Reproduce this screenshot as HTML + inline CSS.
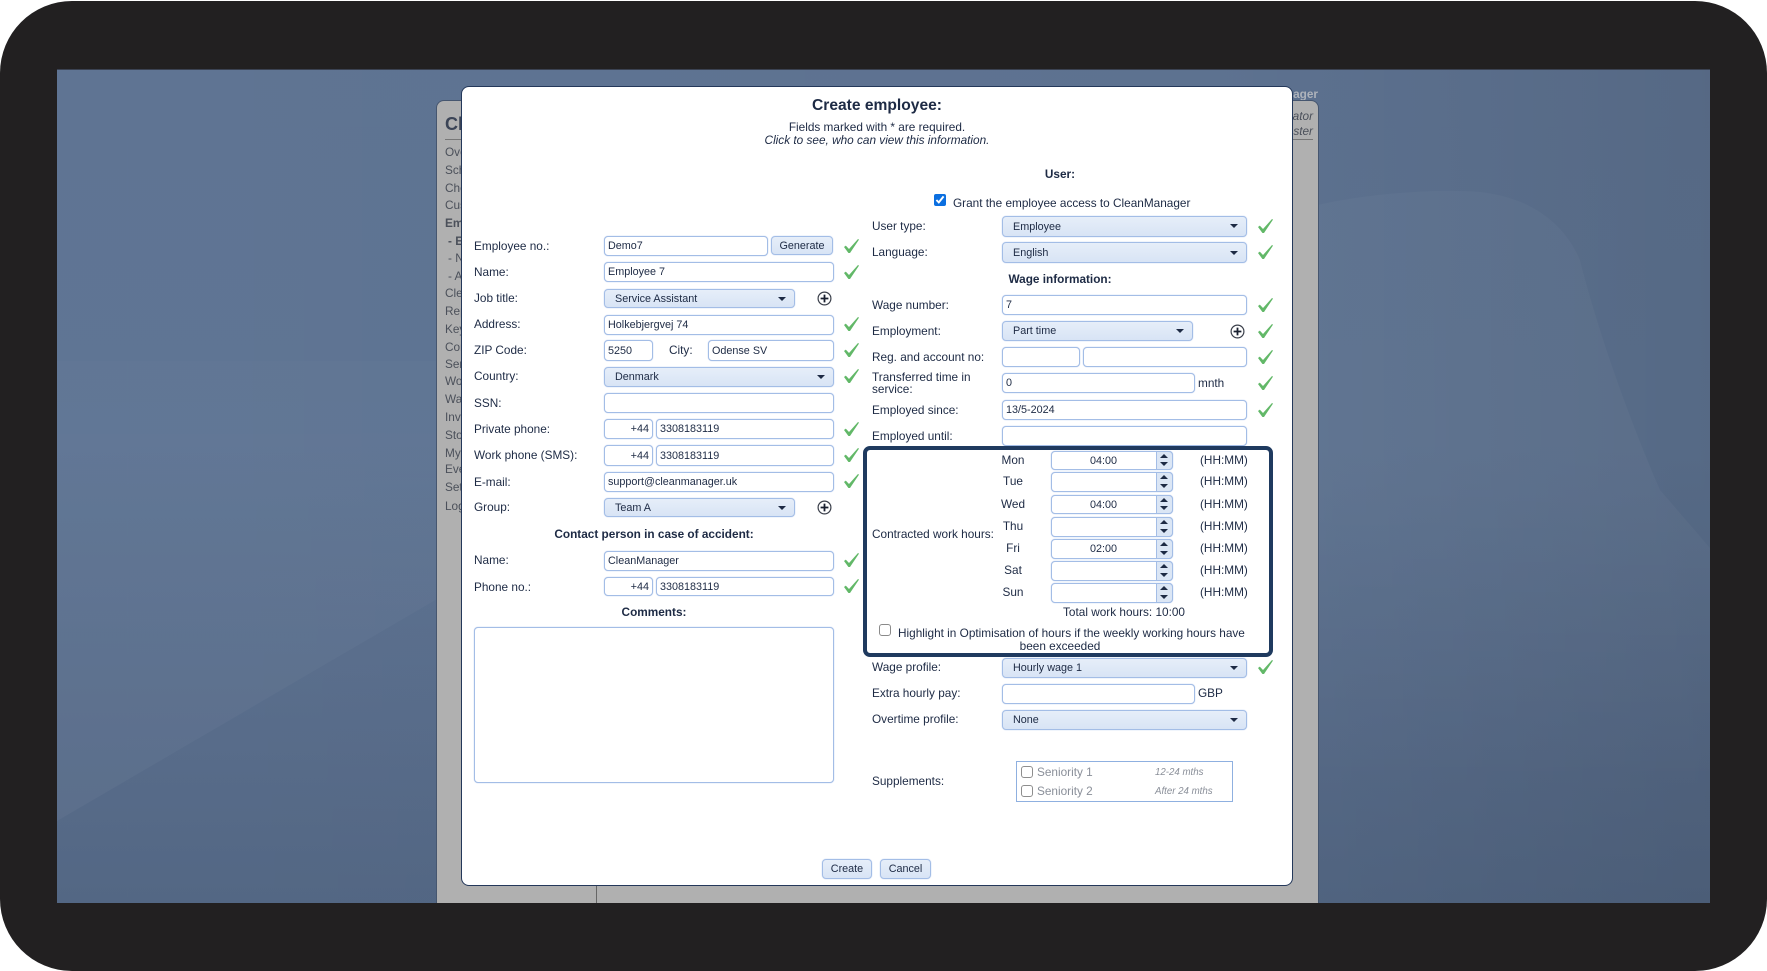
<!DOCTYPE html>
<html><head><meta charset="utf-8"><title>Create employee</title>
<style>
html,body{margin:0;padding:0;background:#fff;width:1767px;height:971px;overflow:hidden}
*{box-sizing:border-box}
body{font-family:"Liberation Sans",Arial,sans-serif;font-size:11.8px;color:#1d2a44;filter:blur(.35px)}
#frame{position:absolute;left:0;top:1px;width:1767px;height:970px;background:#222021;border-radius:72px}
#screen{position:absolute;left:57px;top:69px;width:1653px;height:834px;display:block}
#panel{position:absolute;left:436px;top:100px;width:883px;height:803px;background:#b0b0b0;border:1px solid #46566f;border-bottom:0;border-radius:8px 8px 0 0}
.m{position:absolute;left:445px;height:16px;line-height:16px;color:#4b505a;white-space:nowrap}
#modal{position:absolute;left:461px;top:86px;width:832px;height:800px;background:#fff;border:1px solid #24385a;border-radius:8px}
.l,.c,.h{position:absolute;height:16px;line-height:16px;white-space:nowrap}
.h{font-weight:bold}
.c{text-align:center}
input.i,select.s,button.b{position:absolute;font-family:"Liberation Sans",Arial,sans-serif;font-size:10.8px;color:#1d2a44;border:1px solid #a3bde6;border-radius:4px;margin:0;outline:0}
input.i{background:#fff;padding:0 3px;box-shadow:0 0 1px #a3bde6}
input.r{text-align:right}
input.t{text-align:center;padding:0 17px 0 0}
select.s{appearance:none;-webkit-appearance:none;background:linear-gradient(#e6eef9,#d8e4f5);padding:0 0 0 10px;box-shadow:0 0 1px #a3bde6}
button.b{background:linear-gradient(#e6eef9,#d8e4f5);padding:0;text-align:center;box-shadow:0 0 1px #a3bde6}
.a{position:absolute;width:0;height:0;border-left:4px solid transparent;border-right:4px solid transparent;border-top:4px solid #1d2a44}
.u{position:absolute;width:0;height:0;border-left:4px solid transparent;border-right:4px solid transparent;border-bottom:4px solid #1d2a44}
.sp{position:absolute;left:1156px;width:17px;background:#dbe6f5;border:1px solid #a3bde6;border-radius:0 4px 4px 0}
svg.k{position:absolute;width:15px;height:14px}
svg.p{position:absolute;width:15px;height:15px}
input.x{appearance:none;-webkit-appearance:none;position:absolute;width:12px;height:12px;margin:0;border:1px solid #8a8a8a;border-radius:3px;background:#fff}
#hl{position:absolute;left:863px;top:446px;width:410px;height:211px;border:4.5px solid #1f3a5f;border-radius:7px}
</style></head><body>
<div id="frame"></div>
<svg id="screen" viewBox="57 69 1653 834" xmlns="http://www.w3.org/2000/svg">
<defs>
<linearGradient id="g0" x1="0" y1="0" x2="0" y2="1"><stop offset="0" stop-color="#5f7493"/><stop offset=".45" stop-color="#5f7594"/><stop offset=".8" stop-color="#586c8a"/><stop offset="1" stop-color="#536784"/></linearGradient>
<linearGradient id="g1" x1="0" y1="0" x2="1" y2="0"><stop offset="0" stop-color="#000" stop-opacity="0"/><stop offset=".7" stop-color="#000" stop-opacity=".02"/><stop offset="1" stop-color="#000" stop-opacity=".1"/></linearGradient>
<linearGradient id="g2" x1="0" y1="0" x2="0" y2="1"><stop offset="0" stop-color="#fff" stop-opacity=".025"/><stop offset=".5" stop-color="#fff" stop-opacity=".03"/><stop offset="1" stop-color="#fff" stop-opacity="0"/></linearGradient>
<linearGradient id="g3" x1="0" y1="0" x2="0" y2="1"><stop offset="0" stop-color="#fff" stop-opacity=".012"/><stop offset="1" stop-color="#fff" stop-opacity=".035"/></linearGradient>
</defs>
<rect x="57" y="69" width="1653" height="834" fill="url(#g0)"/>
<rect x="57" y="69" width="1653" height="834" fill="url(#g1)"/>
<polygon points="57,361 437,361 437,599 57,821" fill="url(#g3)"/>
<path d="M1318 205C1360 195 1433 188 1480 192C1533 198 1565 225 1580 260C1595 320 1625 410 1660 490L1710 548L1710 800L1318 800Z" fill="url(#g2)"/>
<rect x="57" y="69" width="1653" height="1" fill="#3b4252"/>
</svg>
<div class="m" style="left:1180px;width:138px;top:86px;text-align:right;font-weight:bold;color:#aeb3bb">CleanManager</div>
<div id="panel"></div>
<div class="m" style="top:112px;font-size:18px;font-weight:bold;height:24px;line-height:24px;color:#3b4456">CleanManager</div>
<div style="position:absolute;left:445px;top:139px;width:868px;height:1px;background:#777"></div>
<div class="m" style="left:1180px;width:133px;top:108px;text-align:right;font-style:italic">Administrator</div>
<div class="m" style="left:1180px;width:133px;top:123px;text-align:right;font-style:italic">Master</div>
<div class="m" style="top:144px">Overview</div><div class="m" style="top:162px">Schedule</div><div class="m" style="top:180px">Check</div><div class="m" style="top:197px">Customers</div><div class="m" style="top:215px;font-weight:bold">Employees</div><div class="m" style="top:233px;left:448px"><b>- E</b></div><div class="m" style="top:250px;left:448px">- N</div><div class="m" style="top:268px;left:448px">- A</div><div class="m" style="top:285px">Cleaning</div><div class="m" style="top:303px">Reports</div><div class="m" style="top:321px">Keys</div><div class="m" style="top:339px">Contacts</div><div class="m" style="top:356px">Services</div><div class="m" style="top:373px">Work</div><div class="m" style="top:391px">Wages</div><div class="m" style="top:409px">Invoices</div><div class="m" style="top:427px">Stock</div><div class="m" style="top:445px">My</div><div class="m" style="top:461px">Events</div><div class="m" style="top:479px">Settings</div><div class="m" style="top:498px">Log out</div>
<div style="position:absolute;left:596px;top:885px;width:1px;height:18px;background:#666"></div>
<div id="modal"></div>

<div class="c h" style="left:662px;width:430px;top:97px;height:18px;line-height:18px;font-size:15.6px">Create employee:</div>
<div class="c" style="left:662px;width:430px;top:119px">Fields marked with * are required.</div>
<div class="c" style="left:662px;width:430px;top:132px;font-style:italic">Click to see, who can view this information.</div>

<div class="l" style="left:474px;top:238px">Employee no.:</div>
<input class="i" style="left:604px;top:236px;width:164px;height:20px" value="Demo7">
<button class="b" style="left:771px;top:236px;width:62px;height:19px">Generate</button>
<div class="l" style="left:474px;top:264px">Name:</div>
<input class="i" style="left:604px;top:262px;width:230px;height:20px" value="Employee 7">
<div class="l" style="left:474px;top:290px">Job title:</div>
<select class="s" style="left:604px;top:289px;width:191px;height:19px"><option>Service Assistant</option></select><span class="a" style="left:778px;top:297px"></span>
<div class="l" style="left:474px;top:316px">Address:</div>
<input class="i" style="left:604px;top:315px;width:230px;height:20px" value="Holkebjergvej 74">
<div class="l" style="left:474px;top:342px">ZIP Code:</div>
<input class="i" style="left:604px;top:340px;width:49px;height:21px" value="5250">
<div class="l" style="left:669px;top:342px">City:</div>
<input class="i" style="left:708px;top:340px;width:126px;height:21px" value="Odense SV">
<div class="l" style="left:474px;top:368px">Country:</div>
<select class="s" style="left:604px;top:367px;width:230px;height:20px"><option>Denmark</option></select><span class="a" style="left:817px;top:375px"></span>
<div class="l" style="left:474px;top:395px">SSN:</div>
<input class="i" style="left:604px;top:393px;width:230px;height:20px">
<div class="l" style="left:474px;top:421px">Private phone:</div>
<input class="i r" style="left:604px;top:419px;width:49px;height:20px" value="+44">
<input class="i" style="left:656px;top:419px;width:178px;height:20px" value="3308183119">
<div class="l" style="left:474px;top:447px">Work phone (SMS):</div>
<input class="i r" style="left:604px;top:445px;width:49px;height:21px" value="+44">
<input class="i" style="left:656px;top:445px;width:178px;height:21px" value="3308183119">
<div class="l" style="left:474px;top:474px">E-mail:</div>
<input class="i" style="left:604px;top:472px;width:230px;height:20px" value="support@cleanmanager.uk">
<div class="l" style="left:474px;top:499px">Group:</div>
<select class="s" style="left:604px;top:498px;width:191px;height:19px"><option>Team A</option></select><span class="a" style="left:778px;top:506px"></span>
<div class="c h" style="left:474px;width:360px;top:526px">Contact person in case of accident:</div>
<div class="l" style="left:474px;top:552px">Name:</div>
<input class="i" style="left:604px;top:551px;width:230px;height:20px" value="CleanManager">
<div class="l" style="left:474px;top:579px">Phone no.:</div>
<input class="i r" style="left:604px;top:577px;width:49px;height:19px" value="+44">
<input class="i" style="left:656px;top:577px;width:178px;height:19px" value="3308183119">
<div class="c h" style="left:474px;width:360px;top:604px">Comments:</div>
<textarea style="position:absolute;left:474px;top:627px;width:360px;height:156px;border:1px solid #a3bde6;border-radius:4px;background:#fff;resize:none;margin:0;outline:0;box-shadow:0 0 1px #a3bde6"></textarea>

<div class="c h" style="left:960px;width:200px;top:166px">User:</div>
<input type="checkbox" checked style="position:absolute;left:934px;top:194px;width:12px;height:12px;margin:0;accent-color:#0b6fe0">
<div class="l" style="left:953px;top:195px">Grant the employee access to CleanManager</div>
<div class="l" style="left:872px;top:218px">User type:</div>
<select class="s" style="left:1002px;top:216px;width:245px;height:21px"><option>Employee</option></select><span class="a" style="left:1230px;top:224px"></span>
<div class="l" style="left:872px;top:244px">Language:</div>
<select class="s" style="left:1002px;top:242px;width:245px;height:21px"><option>English</option></select><span class="a" style="left:1230px;top:251px"></span>
<div class="c h" style="left:960px;width:200px;top:271px">Wage information:</div>
<div class="l" style="left:872px;top:297px">Wage number:</div>
<input class="i" style="left:1002px;top:295px;width:245px;height:20px" value="7">
<div class="l" style="left:872px;top:323px">Employment:</div>
<select class="s" style="left:1002px;top:321px;width:191px;height:20px"><option>Part time</option></select><span class="a" style="left:1176px;top:329px"></span>
<div class="l" style="left:872px;top:349px">Reg. and account no:</div>
<input class="i" style="left:1002px;top:347px;width:78px;height:20px">
<input class="i" style="left:1083px;top:347px;width:164px;height:20px">
<div class="l" style="left:872px;top:371px;height:12px;line-height:12px">Transferred time in</div>
<div class="l" style="left:872px;top:383px;height:12px;line-height:12px">service:</div>
<input class="i" style="left:1002px;top:373px;width:193px;height:20px" value="0">
<div class="l" style="left:1198px;top:375px">mnth</div>
<div class="l" style="left:872px;top:402px">Employed since:</div>
<input class="i" style="left:1002px;top:400px;width:245px;height:20px" value="13/5-2024">
<div class="l" style="left:872px;top:428px">Employed until:</div>
<input class="i" style="left:1002px;top:426px;width:245px;height:20px">

<div class="l" style="left:872px;top:526px">Contracted work hours:</div>
<div class="c" style="left:983px;width:60px;top:452px">Mon</div>
<input class="i t" style="left:1051px;top:451px;width:122px;height:19px" value="04:00"><div class="sp" style="top:451px;height:19px"></div><span class="u" style="left:1160px;top:454px"></span><span class="a" style="left:1160px;top:462px"></span>
<div class="l" style="left:1200px;top:452px">(HH:MM)</div>
<div class="c" style="left:983px;width:60px;top:473px">Tue</div>
<input class="i t" style="left:1051px;top:472px;width:122px;height:20px"><div class="sp" style="top:472px;height:20px"></div><span class="u" style="left:1160px;top:475px"></span><span class="a" style="left:1160px;top:484px"></span>
<div class="l" style="left:1200px;top:473px">(HH:MM)</div>
<div class="c" style="left:983px;width:60px;top:496px">Wed</div>
<input class="i t" style="left:1051px;top:495px;width:122px;height:19px" value="04:00"><div class="sp" style="top:495px;height:19px"></div><span class="u" style="left:1160px;top:498px"></span><span class="a" style="left:1160px;top:506px"></span>
<div class="l" style="left:1200px;top:496px">(HH:MM)</div>
<div class="c" style="left:983px;width:60px;top:518px">Thu</div>
<input class="i t" style="left:1051px;top:517px;width:122px;height:20px"><div class="sp" style="top:517px;height:20px"></div><span class="u" style="left:1160px;top:520px"></span><span class="a" style="left:1160px;top:529px"></span>
<div class="l" style="left:1200px;top:518px">(HH:MM)</div>
<div class="c" style="left:983px;width:60px;top:540px">Fri</div>
<input class="i t" style="left:1051px;top:539px;width:122px;height:20px" value="02:00"><div class="sp" style="top:539px;height:20px"></div><span class="u" style="left:1160px;top:542px"></span><span class="a" style="left:1160px;top:551px"></span>
<div class="l" style="left:1200px;top:540px">(HH:MM)</div>
<div class="c" style="left:983px;width:60px;top:562px">Sat</div>
<input class="i t" style="left:1051px;top:561px;width:122px;height:20px"><div class="sp" style="top:561px;height:20px"></div><span class="u" style="left:1160px;top:564px"></span><span class="a" style="left:1160px;top:573px"></span>
<div class="l" style="left:1200px;top:562px">(HH:MM)</div>
<div class="c" style="left:983px;width:60px;top:584px">Sun</div>
<input class="i t" style="left:1051px;top:583px;width:122px;height:20px"><div class="sp" style="top:583px;height:20px"></div><span class="u" style="left:1160px;top:586px"></span><span class="a" style="left:1160px;top:595px"></span>
<div class="l" style="left:1200px;top:584px">(HH:MM)</div>
<div class="c" style="left:1024px;width:200px;top:604px">Total work hours: 10:00</div>
<input type="checkbox" class="x" style="left:879px;top:624px">
<div class="l" style="left:898px;top:625px">Highlight in Optimisation of hours if the weekly working hours have</div>
<div class="c" style="left:960px;width:200px;top:638px">been exceeded</div>
<div id="hl"></div>

<div class="l" style="left:872px;top:659px">Wage profile:</div>
<select class="s" style="left:1002px;top:658px;width:245px;height:20px"><option>Hourly wage 1</option></select><span class="a" style="left:1230px;top:666px"></span>
<div class="l" style="left:872px;top:685px">Extra hourly pay:</div>
<input class="i" style="left:1002px;top:684px;width:193px;height:20px">
<div class="l" style="left:1198px;top:685px">GBP</div>
<div class="l" style="left:872px;top:711px">Overtime profile:</div>
<select class="s" style="left:1002px;top:710px;width:245px;height:20px"><option>None</option></select><span class="a" style="left:1230px;top:718px"></span>

<div class="l" style="left:872px;top:773px">Supplements:</div>
<div style="position:absolute;left:1016px;top:761px;width:217px;height:41px;border:1px solid #8fb0e0"></div>
<input type="checkbox" class="x" disabled style="left:1021px;top:766px;border-color:#8e8e8e">
<input type="checkbox" class="x" disabled style="left:1021px;top:785px;border-color:#8e8e8e">
<div class="l" style="left:1037px;top:764px;color:#8a8f99">Seniority 1</div>
<div class="l" style="left:1037px;top:783px;color:#8a8f99">Seniority 2</div>
<div class="l" style="left:1155px;top:765px;color:#8a8f99;font-style:italic;font-size:9.7px">12-24 mths</div>
<div class="l" style="left:1155px;top:784px;color:#8a8f99;font-style:italic;font-size:9.7px">After 24 mths</div>
<button class="b" style="left:822px;top:859px;width:50px;height:20px">Create</button>
<button class="b" style="left:880px;top:859px;width:51px;height:20px">Cancel</button>

<svg width="0" height="0" style="position:absolute"><defs>
<polygon id="ck" points="0,8 1.8,6.6 5,10 14,0 15,.6 6,14 4.4,14" fill="#62b868"/>
<g id="pl"><circle cx="7.5" cy="7.5" r="6.4" fill="#fff" stroke="#3a3f4a" stroke-width="1.2"/><path d="M7.5 3.6V11.4M3.6 7.5H11.4" stroke="#1a2030" stroke-width="1.8"/></g>
</defs></svg>
<svg class="k" style="left:844px;top:239px"><use href="#ck"/></svg>
<svg class="k" style="left:844px;top:265px"><use href="#ck"/></svg>
<svg class="k" style="left:844px;top:317px"><use href="#ck"/></svg>
<svg class="k" style="left:844px;top:343px"><use href="#ck"/></svg>
<svg class="k" style="left:844px;top:369px"><use href="#ck"/></svg>
<svg class="k" style="left:844px;top:422px"><use href="#ck"/></svg>
<svg class="k" style="left:844px;top:448px"><use href="#ck"/></svg>
<svg class="k" style="left:844px;top:474px"><use href="#ck"/></svg>
<svg class="k" style="left:844px;top:553px"><use href="#ck"/></svg>
<svg class="k" style="left:844px;top:579px"><use href="#ck"/></svg>
<svg class="k" style="left:1258px;top:219px"><use href="#ck"/></svg>
<svg class="k" style="left:1258px;top:245px"><use href="#ck"/></svg>
<svg class="k" style="left:1258px;top:298px"><use href="#ck"/></svg>
<svg class="k" style="left:1258px;top:324px"><use href="#ck"/></svg>
<svg class="k" style="left:1258px;top:350px"><use href="#ck"/></svg>
<svg class="k" style="left:1258px;top:376px"><use href="#ck"/></svg>
<svg class="k" style="left:1258px;top:403px"><use href="#ck"/></svg>
<svg class="k" style="left:1258px;top:660px"><use href="#ck"/></svg>
<svg class="p" style="left:817px;top:291px"><use href="#pl"/></svg>
<svg class="p" style="left:817px;top:500px"><use href="#pl"/></svg>
<svg class="p" style="left:1230px;top:324px"><use href="#pl"/></svg>
</body></html>
